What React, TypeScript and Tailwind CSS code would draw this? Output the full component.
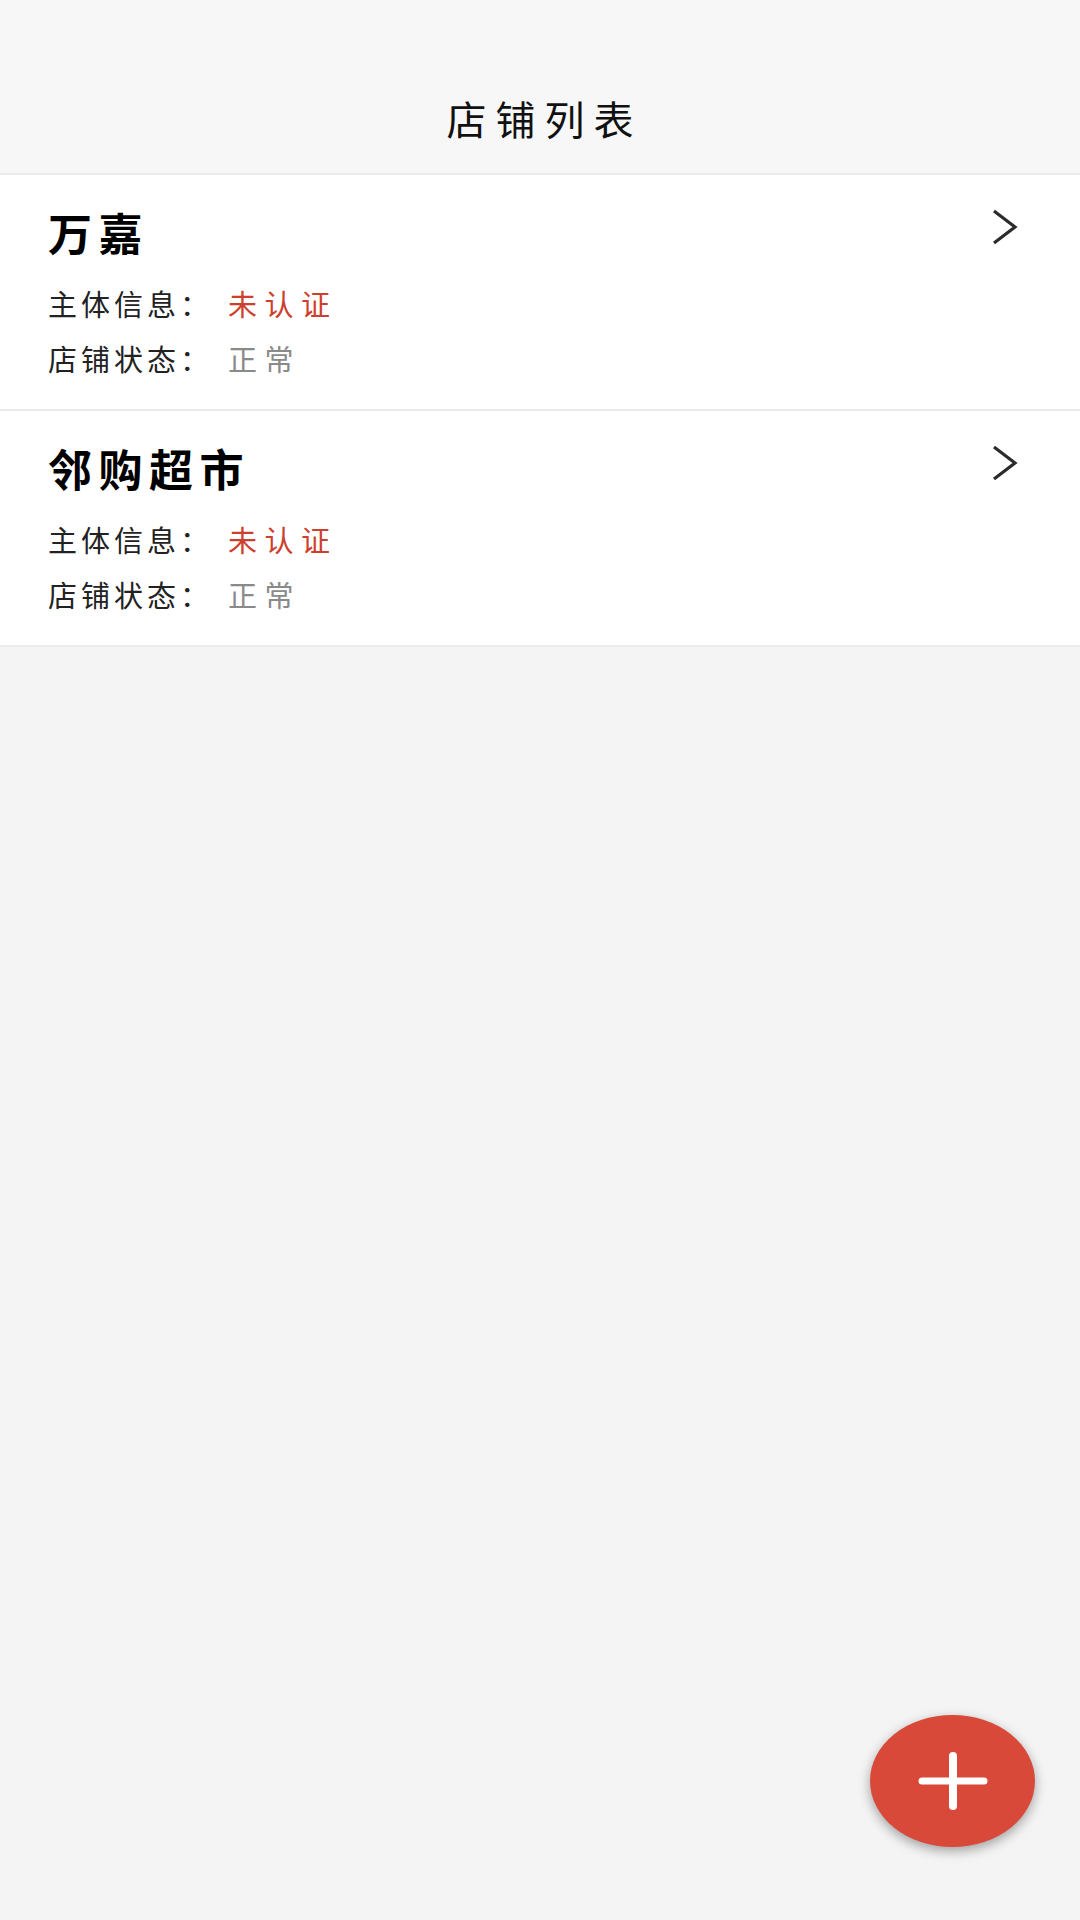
type Shop = {
  name: string;
  verified: boolean;
  status: string;
};

const shops: Shop[] = [
  { name: "万嘉", verified: false, status: "正常" },
  { name: "邻购超市", verified: false, status: "正常" },
];

const cjk = { fontFamily: '"Noto Sans CJK SC", "Noto Sans", sans-serif' };

function Chevron() {
  return (
    <svg width="28" height="36" viewBox="0 0 28 36" fill="none" className="shrink-0 -mt-[1px]">
      <polyline points="4,2 25,18 4,34" stroke="#2b2b2b" strokeWidth="3.2" strokeLinejoin="miter" />
    </svg>
  );
}

function ShopCard({ shop }: { shop: Shop }) {
  return (
    <div className="bg-white border-b-2 border-[#ebebeb] pl-[48px] pr-[62px] pt-[35px] pb-[36px]">
      <div className="flex items-start justify-between">
        <div className="text-[44px] leading-none font-bold tracking-[6.5px] text-black">{shop.name}</div>
        <Chevron />
      </div>
      <div className="mt-[35px] flex items-center text-[29px] leading-none">
        <span className="tracking-[4px] text-[#222]">主体信息：</span>
        <span className="ml-[15px] tracking-[7.5px] text-[#cd3f2e]">
          {shop.verified ? "已认证" : "未认证"}
        </span>
      </div>
      <div className="mt-[26px] flex items-center text-[29px] leading-none">
        <span className="tracking-[4px] text-[#222]">店铺状态：</span>
        <span className="ml-[15px] tracking-[7.5px] text-[#8a8a8a]">{shop.status}</span>
      </div>
    </div>
  );
}

export default function App() {
  return (
    <div className="relative min-h-[1920px] w-full bg-[#f4f4f4]" style={cjk}>
      <header className="h-[175px] bg-[#f7f7f7] border-b-2 border-[#ebebeb] pt-[98px] flex justify-center">
        <h1 className="text-[40px] leading-none font-normal tracking-[9px] pl-[9px] text-[#111]">店铺列表</h1>
      </header>

      <div className="flex flex-col">
        {shops.map((s) => (
          <ShopCard key={s.name} shop={s} />
        ))}
      </div>

      <button
        className="fixed right-[45px] bottom-[73px] w-[165px] h-[132px] rounded-[50%] bg-[#d8493a] flex items-center justify-center shadow-[0_4px_12px_rgba(0,0,0,0.35)]"
        aria-label="添加店铺"
      >
        <svg width="70" height="58" viewBox="0 0 70 58" fill="none">
          <line x1="4" y1="29" x2="66" y2="29" stroke="white" strokeWidth="7" strokeLinecap="round" />
          <line x1="35" y1="4" x2="35" y2="54" stroke="white" strokeWidth="8" strokeLinecap="round" />
        </svg>
      </button>
    </div>
  );
}
